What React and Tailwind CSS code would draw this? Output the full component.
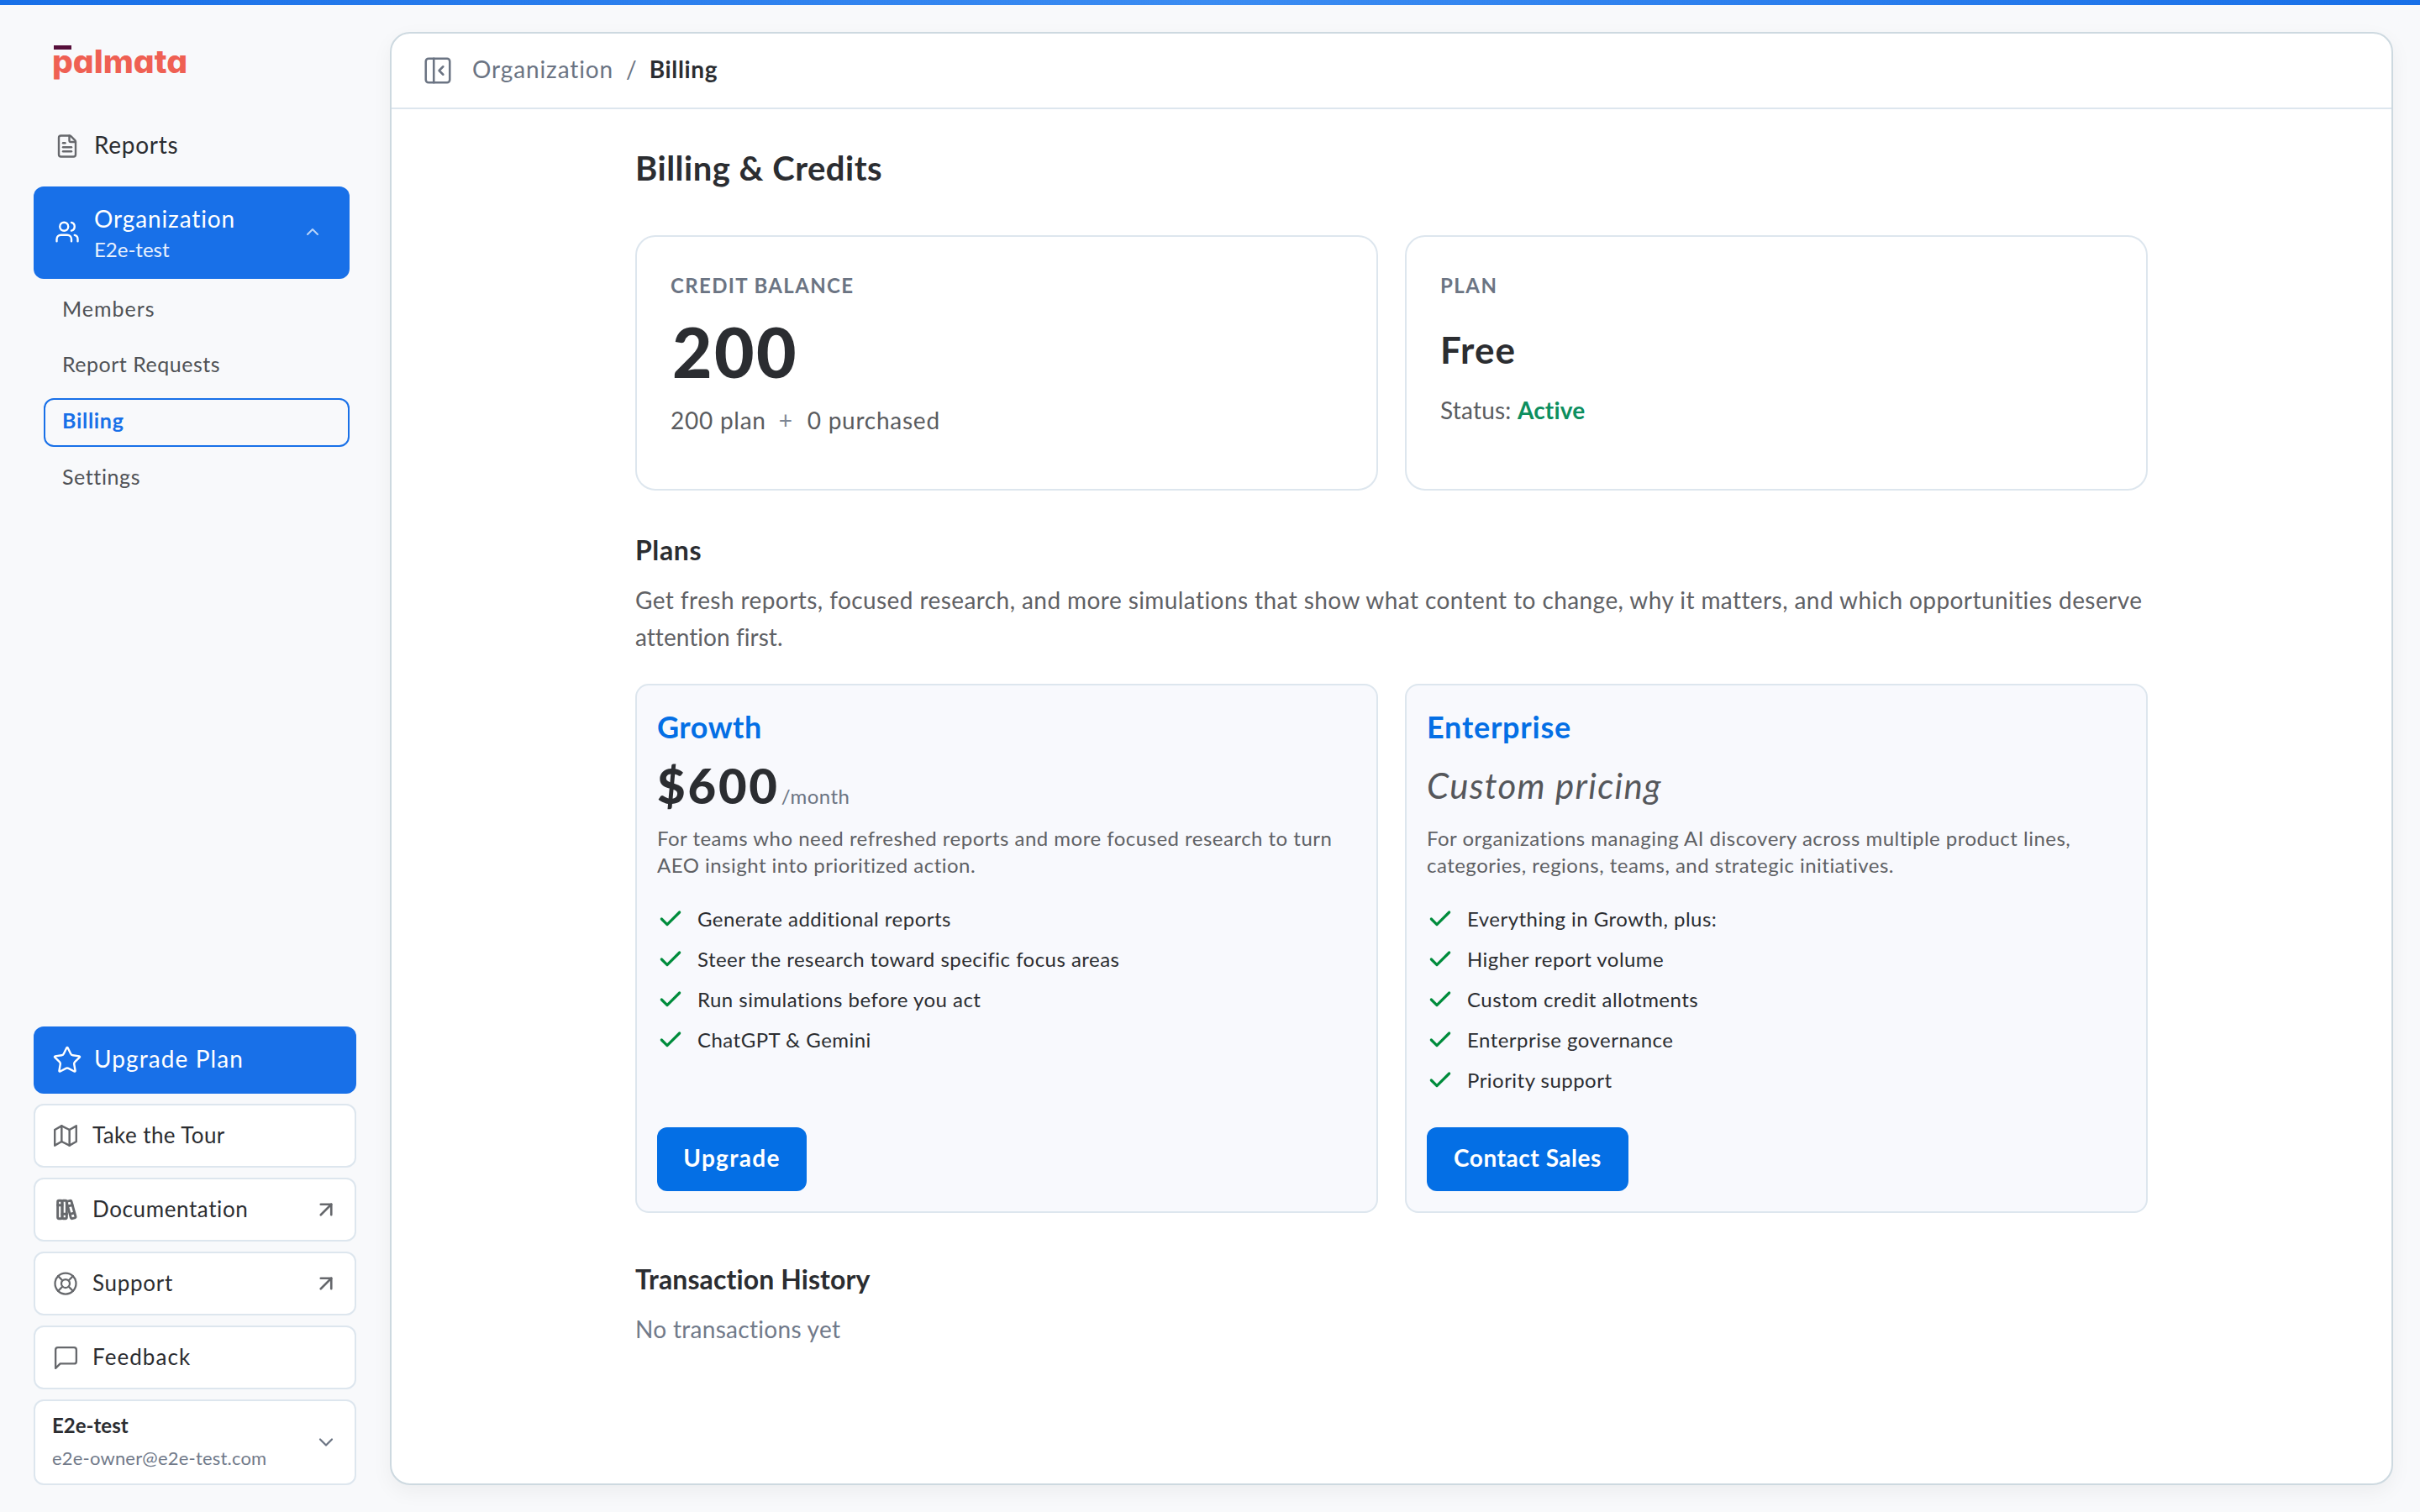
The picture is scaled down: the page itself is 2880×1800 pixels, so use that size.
import React from 'react';
import {
  ArrowUpRight,
  Check,
  ChevronDown,
  ChevronUp,
  FileText,
  LifeBuoy,
  PanelLeftClose,
  Star,
  Users,
} from 'lucide-react';

const Logo = () => (
  <svg width="170" height="44" viewBox="0 0 170 44" className="block overflow-visible">
    <rect x="0" y="0" width="21" height="5" fill="#560f3a" />
    <text
      x="-2"
      y="33"
      textLength="161"
      lengthAdjust="spacingAndGlyphs"
      fill="#ef6053"
      className="font-['Inter'] text-[38px] font-extrabold [font-feature-settings:'cv11']"
    >
      palmata
    </text>
  </svg>
);

const MapIcon = () => (
  <svg width="28" height="28" viewBox="0 0 24 24" fill="none" stroke="currentColor" strokeWidth="2.1" strokeLinecap="round" strokeLinejoin="round" className="shrink-0">
    <path d="M1 6v16l7-4 8 4 7-4V2l-7 4-8-4-7 4z" />
    <path d="M8 2v16" />
    <path d="M16 6v16" />
  </svg>
);

const BooksIcon = () => (
  <svg width="32" height="32" viewBox="0 0 24 24" fill="none" stroke="currentColor" strokeWidth="2.2" strokeLinecap="round" strokeLinejoin="round" className="shrink-0">
    <path d="M5 5a1 1 0 0 1 1-1h2a1 1 0 0 1 1 1v14a1 1 0 0 1-1 1h-2a1 1 0 0 1-1-1z" />
    <path d="M9 5a1 1 0 0 1 1-1h2a1 1 0 0 1 1 1v14a1 1 0 0 1-1 1h-2a1 1 0 0 1-1-1z" />
    <path d="M5 8h4" />
    <path d="M9 16h4" />
    <path d="M13.803 4.56l2.184-.53c.562-.135 1.133.19 1.282.732l3.695 13.418a1.02 1.02 0 0 1-.634 1.219l-.133.041-2.184.53c-.562.135-1.133-.19-1.282-.732l-3.695-13.418a1.02 1.02 0 0 1 .634-1.219l.133-.041z" />
    <path d="M14 9l4-1" />
    <path d="M16 16l3.923-.98" />
  </svg>
);

const MessageIcon = () => (
  <svg width="33" height="33" viewBox="0 0 24 24" fill="none" stroke="currentColor" strokeWidth="1.7" strokeLinecap="round" strokeLinejoin="round" className="shrink-0">
    <path d="M21 15a2 2 0 0 1-2 2H7l-4 4V5a2 2 0 0 1 2-2h14a2 2 0 0 1 2 2z" />
  </svg>
);

const orgLinks = [
  { label: 'Members', spacing: 'tracking-[1px]' },
  { label: 'Report Requests', spacing: 'tracking-[0.5px]' },
  { label: 'Billing', spacing: 'tracking-[0.7px]', active: true },
  { label: 'Settings', spacing: 'tracking-[0.6px]' },
];

const helpLinks = [
  { label: 'Take the Tour', icon: <MapIcon />, spacing: 'tracking-[0.4px]' },
  { label: 'Documentation', icon: <BooksIcon />, spacing: 'tracking-[0.6px]', external: true },
  { label: 'Support', icon: <LifeBuoy size={30} strokeWidth={1.8} className="shrink-0" />, spacing: 'tracking-[0.7px]', external: true },
  { label: 'Feedback', icon: <MessageIcon />, spacing: 'tracking-[1.07px]' },
];

const plans = [
  {
    name: 'Growth',
    nameSpacing: 'tracking-[0.5px]',
    price: '$600',
    lines: ['For teams who need refreshed reports and more focused research to turn', 'AEO insight into prioritized action.'],
    features: [
      'Generate additional reports',
      'Steer the research toward specific focus areas',
      'Run simulations before you act',
      'ChatGPT & Gemini',
    ],
    cta: 'Upgrade',
    ctaClass: 'w-[178px] tracking-[1.3px]',
  },
  {
    name: 'Enterprise',
    nameSpacing: 'tracking-[0.77px]',
    price: null,
    lines: ['For organizations managing AI discovery across multiple product lines,', 'categories, regions, teams, and strategic initiatives.'],
    features: [
      'Everything in Growth, plus:',
      'Higher report volume',
      'Custom credit allotments',
      'Enterprise governance',
      'Priority support',
    ],
    cta: 'Contact Sales',
    ctaClass: 'w-[240px] tracking-[0.54px]',
  },
];

const Sidebar = () => (
  <aside className="flex w-[464px] shrink-0 flex-col pl-10 pt-12 pb-8">
    <div className="h-[88px] pl-6">
      <Logo />
    </div>

    <div className="flex h-16 items-center gap-4 pl-6 text-[#2b2d31]">
      <span className="flex w-8 justify-center text-[#66686c]">
        <FileText size={30} strokeWidth={1.9} />
      </span>
      <span className="pb-1 text-[28px] leading-[38px] tracking-[0.7px]">Reports</span>
    </div>

    <div className="mt-4 flex h-[110px] w-[376px] items-center rounded-xl bg-[#1870e8] pl-6 pr-8 text-white">
      <span className="flex w-8 justify-center pb-0.5">
        <Users size={30} strokeWidth={1.9} />
      </span>
      <div className="ml-4 flex flex-1 flex-col">
        <span className="text-[28px] leading-[38px] tracking-[0.88px]">Organization</span>
        <span className="text-[24px] leading-[35px] text-white/90">E2e-test</span>
      </div>
      <ChevronUp size={24} strokeWidth={2} className="mb-0.5 text-white/70" />
    </div>

    <nav className="mt-[8px] flex w-[376px] flex-col gap-[8.75px] pl-3">
      {orgLinks.map((link) => (
        <a
          key={link.label}
          className={`flex h-[58px] items-center rounded-xl border-2 px-5 pb-[5px] text-[25px] leading-[34px] ${link.spacing} ${
            link.active ? 'border-[#1870e8] font-bold text-[#1870e8]' : 'border-transparent text-[#4f5256]'
          }`}
        >
          {link.label}
        </a>
      ))}
    </nav>

    <div className="mt-auto flex w-[384px] flex-col gap-3">
      <div className="flex h-20 items-center gap-[14px] rounded-xl bg-[#1870e8] pl-[22px] text-white">
        <Star size={36} strokeWidth={1.6} />
        <span className="pb-1 text-[28px] leading-[38px] tracking-[1.1px]">Upgrade Plan</span>
      </div>

      {helpLinks.map((link) => (
        <div key={link.label} className="flex h-[76px] items-center rounded-xl border-2 border-[#dde6ee] bg-white pl-[22px] pr-[19px] text-[#66686c]">
          <span className="flex w-7 justify-center">{link.icon}</span>
          <span className={`ml-[18px] flex-1 pb-[3px] text-[26px] leading-[36px] text-[#2b2d31] ${link.spacing}`}>{link.label}</span>
          {link.external && <ArrowUpRight size={30} strokeWidth={2.1} />}
        </div>
      ))}

      <div className="flex h-[102px] items-center rounded-xl border-2 border-[#dde6ee] bg-white pl-5 pr-5">
        <div className="flex flex-1 flex-col pb-[3px]">
          <span className="text-[24px] font-bold leading-[32px] text-[#2b2d31]">E2e-test</span>
          <span className="mt-2 text-[22px] leading-[29px] tracking-[0.19px] text-[#717a8a]">e2e-owner@e2e-test.com</span>
        </div>
        <ChevronDown size={28} strokeWidth={1.9} className="text-[#6b7483]" />
      </div>
    </div>
  </aside>
);

const PlanCard = ({ plan }) => (
  <div className="flex h-[630px] flex-1 flex-col items-start rounded-2xl border-2 border-[#dde6ee] bg-[#f8f9fd] px-6 pb-6 pt-[27px]">
    <h3 className={`text-[36px] font-bold leading-[44px] text-[#046fe5] ${plan.nameSpacing}`}>{plan.name}</h3>
    <div className="mt-4 flex h-16 items-baseline">
      {plan.price ? (
        <>
          <span className="text-[58px] font-black leading-[64px] tracking-[2.8px] text-[#2b2d31]">{plan.price}</span>
          <span className="ml-0.5 text-[24px] leading-[32px] tracking-[0.5px] text-[#6b7483]">/month</span>
        </>
      ) : (
        <span className="text-[42px] italic leading-[64px] tracking-[1.3px] text-[#55575b]">Custom pricing</span>
      )}
    </div>
    <p className="mt-[15px] whitespace-nowrap text-[24px] leading-[32px] tracking-[0.48px] text-[#5f6165]">
      {plan.lines[0]}
      <br />
      {plan.lines[1]}
    </p>
    <ul className="mt-8 flex flex-col gap-4">
      {plan.features.map((feature) => (
        <li key={feature} className="flex h-8 items-center gap-4">
          <Check size={32} strokeWidth={2.4} className="text-[#008c3c]" />
          <span className="text-[24px] leading-[32px] tracking-[0.47px] text-[#2b2d31]">{feature}</span>
        </li>
      ))}
    </ul>
    <button className={`mt-auto flex h-[76px] items-center justify-center rounded-xl bg-[#046fe5] pb-1 text-[28px] font-bold text-white ${plan.ctaClass}`}>
      {plan.cta}
    </button>
  </div>
);

const App = () => {
  return (
    <div className="flex h-[1800px] w-[2880px] flex-col overflow-hidden bg-[#f8f9fb] font-['Lato',sans-serif]">
      <div className="h-1.5 shrink-0 bg-linear-to-r from-[#1870e8] via-[#3b8cf2] to-[#1870e8]" />
      <div className="flex min-h-0 flex-1">
        <Sidebar />

        <main className="mt-8 mb-8 mr-8 flex flex-1 flex-col rounded-3xl border-2 border-[#cdd9e0] bg-white shadow-[0_8px_24px_rgba(0,0,0,0.05)]">
          <header className="flex h-[90px] items-center border-b-2 border-[#dde6ee] pl-[36px] text-[28px] leading-[38px] text-[#6b7483]">
            <PanelLeftClose size={38} strokeWidth={1.6} />
            <span className="ml-[22px] pb-1 tracking-[0.88px]">Organization</span>
            <span className="ml-[15px] pb-1">/</span>
            <span className="ml-[15px] pb-1 font-bold tracking-[0.65px] text-[#2b2d31]">Billing</span>
          </header>

          <div className="mx-auto flex w-[1800px] flex-col pt-[46px]">
            <h1 className="text-[40px] font-bold leading-[48px] tracking-[0.5px] text-[#2b2d31]">Billing &amp; Credits</h1>

            <div className="mt-[56px] flex gap-8">
              <div className="h-[304px] flex-1 rounded-3xl border-2 border-[#dde6ee] pl-10 pt-[42px]">
                <p className="text-[24px] font-bold leading-[32px] tracking-[1.35px] text-[#6b7483]">CREDIT BALANCE</p>
                <p className="mt-[14px] pl-0.5 text-[82px] font-black leading-[96px] tracking-[2.4px] text-[#2b2d31]">200</p>
                <p className="mt-[14px] flex text-[28px] leading-[40px] tracking-[0.75px] text-[#5a5c60]">
                  <span>200 plan</span>
                  <span className="ml-[15px] text-[#7d8694]">+</span>
                  <span className="ml-[17px]">0 purchased</span>
                </p>
              </div>
              <div className="h-[304px] flex-1 rounded-3xl border-2 border-[#dde6ee] pl-10 pt-[42px]">
                <p className="text-[24px] font-bold leading-[32px] tracking-[1.5px] text-[#6b7483]">PLAN</p>
                <p className="mt-8 text-[44px] font-bold leading-[56px] tracking-[1px] text-[#2b2d31]">Free</p>
                <p className="mt-6 text-[28px] leading-[40px] tracking-[0.2px] text-[#5a5c60]">
                  Status: <span className="font-bold text-[#0d8f5f]">Active</span>
                </p>
              </div>
            </div>

            <h2 className="mt-[51px] text-[32px] font-bold leading-[40px] tracking-[0.6px] text-[#2b2d31]">Plans</h2>
            <p className="mt-[17px] whitespace-nowrap text-[28px] leading-[44px] tracking-[0.42px] text-[#5f6165]">
              Get fresh reports, focused research, and more simulations that show what content to change, why it matters, and which opportunities deserve
              <br />
              <span className="tracking-[0.05px]">attention first.</span>
            </p>

            <div className="mt-[34px] flex gap-8">
              {plans.map((plan) => (
                <PlanCard key={plan.name} plan={plan} />
              ))}
            </div>

            <h2 className="mt-[59px] text-[32px] font-bold leading-[40px] tracking-[0.1px] text-[#2b2d31]">Transaction History</h2>
            <p className="mt-[19px] text-[28px] leading-[40px] tracking-[0.3px] text-[#717a8a]">No transactions yet</p>
          </div>
        </main>
      </div>
    </div>
  );
};

export default App;
